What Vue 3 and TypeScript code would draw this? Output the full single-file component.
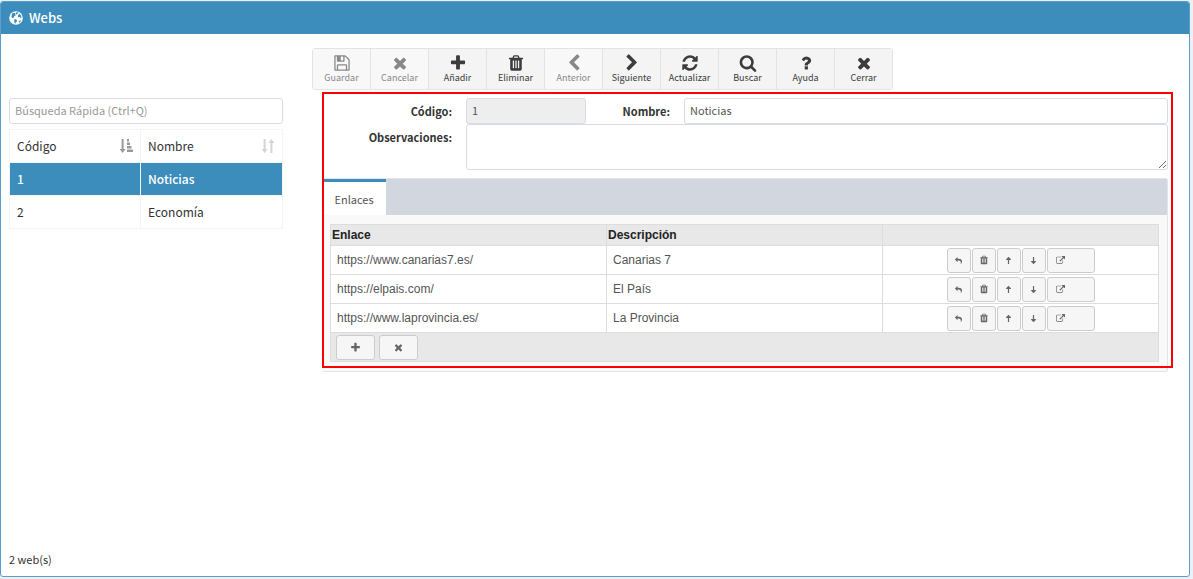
<script setup lang="ts">
import { ref } from 'vue'

interface Tool { label: string; icon: string; disabled?: boolean }
interface Link { url: string; description: string }

const icons: Record<string, string> = {
  save: 'M512 1536h768v-384h-768v384zm896 0h128v-896q0-14-10-38.5t-20-34.5l-281-281q-10-10-34-20t-39-10v416q0 40-28 68t-68 28h-576q-40 0-68-28t-28-68v-416h-128v1280h128v-416q0-40 28-68t68-28h832q40 0 68 28t28 68v416zm-384-928v-320q0-13-9.5-22.5t-22.5-9.5h-192q-13 0-22.5 9.5t-9.5 22.5v320q0 13 9.5 22.5t22.5 9.5h192q13 0 22.5-9.5t9.5-22.5zm640 32v928q0 40-28 68t-68 28h-1344q-40 0-68-28t-28-68v-1344q0-40 28-68t68-28h928q40 0 88 20t76 48l280 280q28 28 48 76t20 88z',
  times: 'M1490 1322q0 40-28 68l-136 136q-28 28-68 28t-68-28l-294-294-294 294q-28 28-68 28t-68-28l-136-136q-28-28-28-68t28-68l294-294-294-294q-28-28-28-68t28-68l136-136q28-28 68-28t68 28l294 294 294-294q28-28 68-28t68 28l136 136q28 28 28 68t-28 68l-294 294 294 294q28 28 28 68z',
  plus: 'M1600 736v192q0 40-28 68t-68 28h-416v416q0 40-28 68t-68 28h-192q-40 0-68-28t-28-68v-416h-416q-40 0-68-28t-28-68v-192q0-40 28-68t68-28h416v-416q0-40 28-68t68-28h192q40 0 68 28t28 68v416h416q40 0 68 28t28 68z',
  trash: 'M704 1376v-704q0-14-9-23t-23-9h-64q-14 0-23 9t-9 23v704q0 14 9 23t23 9h64q14 0 23-9t9-23zm256 0v-704q0-14-9-23t-23-9h-64q-14 0-23 9t-9 23v704q0 14 9 23t23 9h64q14 0 23-9t9-23zm256 0v-704q0-14-9-23t-23-9h-64q-14 0-23 9t-9 23v704q0 14 9 23t23 9h64q14 0 23-9t9-23zm-544-992h448l-48-117q-7-9-17-11h-317q-10 2-17 11zm928 32v64q0 14-9 23t-23 9h-96v948q0 83-47 143.5t-113 60.5h-832q-66 0-113-58.5t-47-141.5v-952h-96q-14 0-23-9t-9-23v-64q0-14 9-23t23-9h309l70-167q15-37 54-63t79-26h320q40 0 79 26t54 63l70 167h309q14 0 23 9t9 23z',
  left: 'M1427 301l-531 531 531 531q19 19 19 45t-19 45l-166 166q-19 19-45 19t-45-19l-742-742q-19-19-19-45t19-45l742-742q19-19 45-19t45 19l166 166q19 19 19 45t-19 45z',
  right: 'M1363 877l-742 742q-19 19-45 19t-45-19l-166-166q-19-19-19-45t19-45l531-531-531-531q-19-19-19-45t19-45l166-166q19-19 45-19t45 19l742 742q19 19 19 45t-19 45z',
  refresh: 'M1639 1056q0 5-1 7-64 268-268 434.5t-478 166.5q-146 0-282.5-55t-243.5-157l-129 129q-19 19-45 19t-45-19-19-45v-448q0-26 19-45t45-19h448q26 0 45 19t19 45-19 45l-137 137q71 66 161 102t187 36q134 0 250-65t186-179q11-17 53-117 8-23 30-23h192q13 0 22.5 9.5t9.5 22.5zm25-800v448q0 26-19 45t-45 19h-448q-26 0-45-19t-19-45 19-45l138-138q-148-137-349-137-134 0-250 65t-186 179q-11 17-53 117-8 23-30 23h-199q-13 0-22.5-9.5t-9.5-22.5v-7q65-268 270-434.5t480-166.5q146 0 284 55.5t245 156.5l130-129q19-19 45-19t45 19 19 45z',
  search: 'M1216 832q0-185-131.5-316.5t-316.5-131.5-316.5 131.5-131.5 316.5 131.5 316.5 316.5 131.5 316.5-131.5 131.5-316.5zm512 832q0 52-38 90t-90 38q-54 0-90-38l-343-342q-179 124-399 124-143 0-273.5-55.5t-225-150-150-225-55.5-273.5 55.5-273.5 150-225 225-150 273.5-55.5 273.5 55.5 225 150 150 225 55.5 273.5q0 220-124 399l343 343q37 37 37 90z',
  question: 'M1088 1256v240q0 16-12 28t-28 12h-240q-16 0-28-12t-12-28v-240q0-16 12-28t28-12h240q16 0 28 12t12 28zm316-600q0 54-15.5 101t-35 76.5-55 59.5-57.5 43.5-61 35.5q-41 23-68.5 65t-27.5 67q0 17-12 32.5t-28 15.5h-240q-15 0-25.5-18.5t-10.5-37.5v-45q0-83 65-156.5t143-108.5q59-27 84-56t25-76q0-42-46.5-74t-107.5-32q-65 0-108 29-35 25-107 115-13 16-31 16-12 0-25-8l-164-125q-13-10-15.5-25t5.5-28q160-266 464-266 80 0 161 31t146 83 106 127.5 41 158.5z',
  undo: 'M700 200v330h250q650 0 650 580 0 230-170 430h-120q70-180 40-340-50-310-400-310h-250v330L180 710z',
  up: 'M896 150l480 520v120h-360v800H776V790H416V670z',
  down: 'M896 1642l480-520v-120h-360V202H776v800H416v120z',
  external: 'M1408 928v320q0 119-84.5 203.5t-203.5 84.5h-832q-119 0-203.5-84.5t-84.5-203.5v-832q0-119 84.5-203.5t203.5-84.5h704q14 0 23 9t9 23v64q0 14-9 23t-23 9h-704q-66 0-113 47t-47 113v832q0 66 47 113t113 47h832q66 0 113-47t47-113v-320q0-14 9-23t23-9h64q14 0 23 9t9 23zm384-864v512q0 26-19 45t-45 19-45-19l-176-176-652 652q-10 10-23 10t-23-10l-114-114q-10-10-10-23t10-23l652-652-176-176q-19-19-19-45t19-45 45-19h512q26 0 45 19t19 45z',
}

const tools: Tool[] = [
  { label: 'Guardar', icon: 'save', disabled: true },
  { label: 'Cancelar', icon: 'times', disabled: true },
  { label: 'Añadir', icon: 'plus' },
  { label: 'Eliminar', icon: 'trash' },
  { label: 'Anterior', icon: 'left', disabled: true },
  { label: 'Siguiente', icon: 'right' },
  { label: 'Actualizar', icon: 'refresh' },
  { label: 'Buscar', icon: 'search' },
  { label: 'Ayuda', icon: 'question' },
  { label: 'Cerrar', icon: 'times' },
]

const webs = [
  { code: '1', name: 'Noticias' },
  { code: '2', name: 'Economía' },
]
const selected = ref('1')

const links: Link[] = [
  { url: 'https://www.canarias7.es/', description: 'Canarias 7' },
  { url: 'https://elpais.com/', description: 'El País' },
  { url: 'https://www.laprovincia.es/', description: 'La Provincia' },
]
const rowActions = [
  { label: 'Deshacer', icon: 'undo' },
  { label: 'Eliminar', icon: 'trash' },
  { label: 'Subir', icon: 'up' },
  { label: 'Bajar', icon: 'down' },
  { label: 'Abrir', icon: 'external' },
]

const query = ref('')
const code = ref('1')
const name = ref('Noticias')
const notes = ref('')
</script>

<template>
  <div class="page">
    <section class="panel">
      <header class="title">
        <svg class="globe" viewBox="0 0 14 14" aria-hidden="true">
          <circle cx="7" cy="7" r="6.8" fill="#fff" />
          <path
            fill="#3c8dbc"
            d="M3.200 2.600 5 1.800l1.300.5-.2 1.100.9.4-1 1.300-1.100.5.1 1.100-1.100-.1.300.9-1-.6-.9-1.500zM7 1.600l2-.3.5.8-1.200.7-.6 1-.8-.8zM8.800 4.200l1.700-1.400 1.500 1.700.5 2-.9.4-.9-1.100-1 .6-1-.7.500-.8zM5.200 8.200l1.700.1 1.300 1.200-.4 1.300-1.100.8-.4 1.200-.8-1-.3-1.900zM9.800 10.300l1.500-1 .6.6-1.200 1.500-1 .2z"
          />
        </svg>
        <h1>Webs</h1>
      </header>

      <div class="body">
        <aside class="sidebar">
          <input v-model="query" class="field" type="search" aria-label="Búsqueda Rápida" placeholder="Búsqueda Rápida (Ctrl+Q)" />
          <table class="webs">
            <thead>
              <tr>
                <th scope="col">
                  <div class="head">
                    Código
                    <svg class="sort on" viewBox="0 0 14 14" aria-hidden="true">
                      <path d="M2.600 0h2v10h2l-3 4-3-4h2zM8 0h2v2.500H8zM8 3.500h3V6H8zM8 7h4.500v2.500H8zM8 10.500h6V13H8z" />
                    </svg>
                  </div>
                </th>
                <th scope="col">
                  <div class="head">
                    Nombre
                    <svg class="sort" viewBox="0 0 14 14" aria-hidden="true">
                      <path d="M2.600 0h2v10h2l-3 4-3-4h2zM9.400 14h2V4h2l-3-4-3 4h2z" />
                    </svg>
                  </div>
                </th>
              </tr>
            </thead>
            <tbody>
              <tr v-for="web in webs" :key="web.code" :class="{ active: web.code === selected }" @click="selected = web.code">
                <td>{{ web.code }}</td>
                <td>{{ web.name }}</td>
              </tr>
            </tbody>
          </table>
          <p class="count">2 web(s)</p>
        </aside>

        <main class="main">
          <div class="toolbar" role="toolbar" aria-label="Acciones">
            <button v-for="tool in tools" :key="tool.label" type="button" :disabled="tool.disabled">
              <svg viewBox="0 0 1792 1792" aria-hidden="true"><path :d="icons[tool.icon]" /></svg>
              <span>{{ tool.label }}</span>
            </button>
          </div>

          <form class="form" @submit.prevent>
            <div class="fields">
              <label for="code">Código:</label>
              <input id="code" v-model="code" class="field" type="text" disabled />
              <label for="name">Nombre:</label>
              <input id="name" v-model="name" class="field" type="text" />
              <label for="notes">Observaciones:</label>
              <textarea id="notes" v-model="notes" class="field notes"></textarea>
            </div>

            <div class="tabs">
              <div class="tablist" role="tablist">
                <button type="button" class="tab" role="tab" aria-selected="true">Enlaces</button>
              </div>
              <div class="tabpanel" role="tabpanel">
                <table class="links">
                  <thead>
                    <tr>
                      <th scope="col">Enlace</th>
                      <th scope="col">Descripción</th>
                      <td></td>
                    </tr>
                  </thead>
                  <tbody>
                    <tr v-for="link in links" :key="link.url">
                      <td>{{ link.url }}</td>
                      <td>{{ link.description }}</td>
                      <td>
                        <div class="actions">
                          <button
                            v-for="action in rowActions"
                            :key="action.icon"
                            type="button"
                            class="small"
                            :class="action.icon"
                            :aria-label="action.label"
                          >
                            <svg viewBox="0 0 1792 1792" aria-hidden="true"><path :d="icons[action.icon]" /></svg>
                          </button>
                        </div>
                      </td>
                    </tr>
                  </tbody>
                  <tfoot>
                    <tr>
                      <td colspan="3">
                        <div class="foot">
                          <button type="button" class="small wide" aria-label="Añadir enlace">
                            <svg viewBox="0 0 1792 1792" aria-hidden="true"><path :d="icons.plus" /></svg>
                          </button>
                          <button type="button" class="small wide" aria-label="Quitar enlace">
                            <svg viewBox="0 0 1792 1792" aria-hidden="true"><path :d="icons.times" /></svg>
                          </button>
                        </div>
                      </td>
                    </tr>
                  </tfoot>
                </table>
              </div>
            </div>
            <div class="highlight" aria-hidden="true"></div>
          </form>
        </main>
      </div>
    </section>
  </div>
</template>

<style>
body {
  background: #ecf0f5;
}
</style>

<style scoped>
.page,
.page * {
  box-sizing: border-box;
}
.page {
  display: flex;
  min-height: 100vh;
  padding: 1px 3px 2px 0;
  background: #ecf0f5;
  color: #333;
  font-family: "Noto Sans CJK SC", "Noto Sans", sans-serif;
  font-size: 11px;
  line-height: 18px;
}
button,
input,
textarea {
  font: inherit;
  color: inherit;
  margin: 0;
}
.panel {
  flex: 1;
  display: flex;
  flex-direction: column;
  border: 1px solid #5a9fc9;
  border-radius: 3px;
  background: #fff;
  overflow: hidden;
}
.title {
  display: flex;
  align-items: center;
  gap: 6px;
  height: 32px;
  padding-left: 8px;
  background: #3c8dbc;
  color: #fff;
}
.title h1 {
  margin: 0;
  font-size: 13px;
  font-weight: 500;
  line-height: 20px;
}
.globe {
  width: 14px;
  height: 14px;
}
.body {
  flex: 1;
  display: flex;
  gap: 29px;
  padding: 14px 21px 8px 8px;
}
.sidebar {
  flex: 0 0 274px;
  display: flex;
  flex-direction: column;
  padding-top: 50px;
}
.field {
  display: block;
  width: 100%;
  height: 26px;
  padding: 0 5px 2px;
  border: 1px solid #d9dbe5;
  border-radius: 3px;
  background: #fff;
  color: #555;
  outline: none;
}
.field::placeholder {
  color: #999;
  opacity: 1;
}
.field:disabled {
  background: #eee;
}
.webs {
  width: 100%;
  margin-top: 5px;
  border-collapse: collapse;
  table-layout: fixed;
  font-size: 12px;
}
.webs th,
.webs td {
  height: 33px;
  padding: 0 7px;
  border: 1px solid #f4f4f4;
  text-align: left;
  font-weight: 400;
}
.webs th:first-child {
  width: 48%;
}
.webs .active td {
  background: #3c8dbc;
  color: #fff;
  font-weight: 500;
}
.webs .active td + td {
  border-left-color: #b5d3e6;
}
.head {
  display: flex;
  align-items: center;
  justify-content: space-between;
}
.sort {
  width: 14px;
  height: 14px;
  fill: #d5d5d5;
}
.sort.on {
  fill: #999;
}
.count {
  margin: auto 0 0;
}
.main {
  flex: 1;
  min-width: 0;
}
.toolbar {
  display: flex;
  width: 581px;
  max-width: 100%;
  border: 1px solid #e3e3e3;
  border-radius: 3px;
  overflow: hidden;
}
.toolbar button {
  flex: 1;
  display: flex;
  flex-direction: column;
  align-items: center;
  height: 40px;
  padding: 5px 0 0;
  border: 0;
  border-right: 1px solid #e3e3e3;
  background: #f4f4f4;
  color: #3c3c3c;
  font-size: 9px;
  line-height: 11px;
}
.toolbar button:last-child {
  border-right: 0;
}
.toolbar button:disabled {
  background: #f8f8f8;
  color: #888;
}
.toolbar svg {
  width: 18px;
  height: 18px;
  fill: currentColor;
}
.form {
  position: relative;
  margin-left: 10px;
  padding-top: 8px;
}
.fields {
  display: grid;
  grid-template-columns: 130px 120px 70px minmax(0, 1fr);
  column-gap: 14px;
}
.fields label {
  padding-top: 4px;
  text-align: right;
  font-weight: 700;
}
.notes {
  grid-column: 2 / -1;
  height: 46px;
  resize: both;
}
.tabs {
  margin-top: 8px;
  border: 1px solid #e2e4ea;
  border-left: 0;
  border-radius: 3px;
  background: #f9f9f9;
}
.tablist {
  display: flex;
  background: #d2d6de;
}
.tab {
  width: 64px;
  height: 36px;
  padding: 0;
  border: 0;
  border-top: 3px solid #3c8dbc;
  background: #fff;
  color: #555;
}
.tabpanel {
  padding: 9px 8px;
}
.links {
  width: 100%;
  border-collapse: collapse;
  table-layout: fixed;
  background: #fff;
  font-family: "Liberation Sans", Arial, sans-serif;
  font-size: 12px;
  color: #555;
}
.links th,
.links td {
  padding: 0 6px;
  border: 1px solid #ddd;
}
.links tbody td {
  height: 29px;
}
.links thead th,
.links thead td {
  height: 21px;
  padding: 0 1px;
  background: #e8e8e8;
  color: #222;
  text-align: left;
}
.links tfoot td {
  height: 29px;
  padding: 0 5px;
  background: #e8e8e8;
}
.actions {
  display: flex;
  justify-content: center;
  gap: 1px;
}
.small {
  display: flex;
  align-items: center;
  justify-content: center;
  width: 24px;
  height: 25px;
  padding: 0;
  border: 1px solid #ccc;
  border-radius: 3px;
  background: #f6f6f6;
}
.small svg {
  width: 9px;
  height: 9px;
  fill: #666;
}
.small.trash svg {
  width: 10px;
  height: 10px;
}
.small.external {
  width: 48px;
  justify-content: flex-start;
  padding-left: 8px;
}
.foot {
  display: flex;
  gap: 4px;
}
.small.wide {
  width: 39px;
}
.small.wide svg {
  width: 11px;
  height: 11px;
}
.highlight {
  position: absolute;
  inset: 2px -5px 4px 0;
  border: 2px solid #f00;
  pointer-events: none;
}
</style>
